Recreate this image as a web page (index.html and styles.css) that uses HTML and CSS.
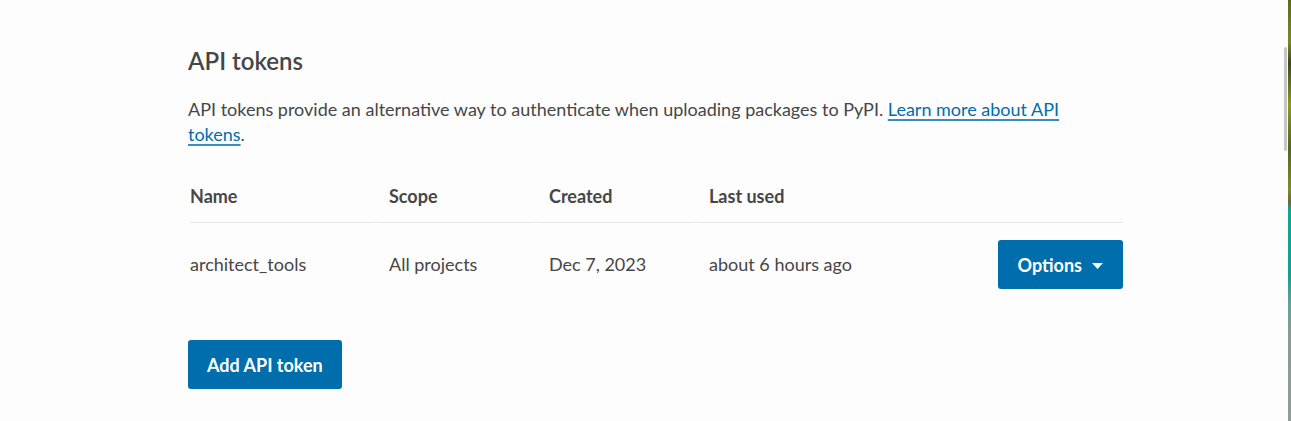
FILE: index.html
```html
<!DOCTYPE html>
<html lang="en">
<head>
<meta charset="utf-8">
<title>API tokens</title>
<link rel="stylesheet" href="styles.css">
</head>
<body>
<div class="page">
  <main class="content">
    <h2 class="title">API tokens</h2>
    <p class="lead">API tokens provide an alternative way to authenticate when uploading packages to PyPI. <a href="#" class="link">Learn more about API tokens</a>.</p>
    <table class="tokens">
      <colgroup>
        <col class="c-name"><col class="c-scope"><col class="c-created"><col>
      </colgroup>
      <thead>
        <tr>
          <th class="first">Name</th>
          <th>Scope</th>
          <th>Created</th>
          <th>Last used</th>
        </tr>
      </thead>
      <tbody>
        <tr>
          <td class="first">architect_tools</td>
          <td>All projects</td>
          <td>Dec 7, 2023</td>
          <td class="last">
            <div class="last-row">
              <span>about 6 hours ago</span>
              <button class="btn btn-options">Options
                <svg class="caret" width="11" height="6" viewBox="0 0 11 6"><path d="M0 0H11L5.5 6Z" fill="#fff"/></svg>
              </button>
            </div>
          </td>
        </tr>
      </tbody>
    </table>
    <button class="btn btn-add">Add API token</button>
  </main>
  <div class="scroll-track"><div class="scroll-thumb"></div></div>
  <div class="edge-strip"></div>
</div>
</body>
</html>
```

FILE: styles.css
```css
html, body {
  margin: 0;
  padding: 0;
  height: 100%;
}
body {
  background: #fdfdfd;
  color: #464646;
  font-family: "Lato", "Liberation Sans", sans-serif;
  overflow: hidden;
}
.page {
  display: flex;
  height: 421px;
}
.content {
  flex: 1;
  padding: 46px 0 0 188px;
  box-sizing: border-box;
}
.title {
  margin: 0;
  font-size: 24px;
  line-height: 30px;
  font-weight: 600;
  color: #464646;
}
.lead {
  margin: 21px 0 0;
  width: 900px;
  font-size: 18px;
  line-height: 25px;
}
.link {
  color: #006dad;
  text-decoration: underline;
  text-decoration-color: #3a8cc4;
  text-decoration-thickness: 2px;
  text-underline-offset: 3px;
}
.tokens {
  margin-top: 25px;
  width: 937px;
  border-collapse: separate;
  border-spacing: 2.5px 0;
  font-size: 18px;
  line-height: 25px;
}
.c-name { width: 185px; }
.c-scope { width: 158px; }
.c-created { width: 158px; }
.tokens th {
  text-align: left;
  font-weight: 700;
  padding: 12px 12px 13px;
  border-bottom: 1px solid #e6e6e6;
}
.tokens td {
  padding: 17px 12px;
  vertical-align: middle;
}
.tokens .first {
  padding-left: 0;
}
.tokens td.last {
  padding-right: 0;
}
.last-row {
  display: flex;
  align-items: center;
  justify-content: space-between;
}
.btn {
  background: #006dad;
  color: #fff;
  border: 0;
  border-radius: 3px;
  font-family: "Lato", "Liberation Sans", sans-serif;
  font-size: 18px;
  font-weight: 700;
  height: 49px;
  padding: 0 19px;
  cursor: pointer;
}
.btn-options {
  display: flex;
  align-items: center;
  gap: 10px;
  padding: 0 20px;
}
.caret {
  display: block;
  margin-top: 3px;
}
.btn-add {
  margin-top: 34px;
  display: block;
}
.scroll-track {
  width: 5px;
  padding-top: 47px;
  box-sizing: border-box;
}
.scroll-thumb {
  width: 3px;
  height: 104px;
  margin-left: 1px;
  background: #c6c6c6;
  border-radius: 2px;
}
.edge-strip {
  width: 3px;
  background: linear-gradient(to bottom,
    #5c6a1a 0%, #7a8a20 10%, #3c4a18 15%, #8c9a24 25%, #54661c 35%, #7e8e22 45%,
    #6a6a38 48%, #0aa896 50%, #12a090 65%, #5fa29a 72%, #8a9a94 80%, #909c96 100%);
}
```
